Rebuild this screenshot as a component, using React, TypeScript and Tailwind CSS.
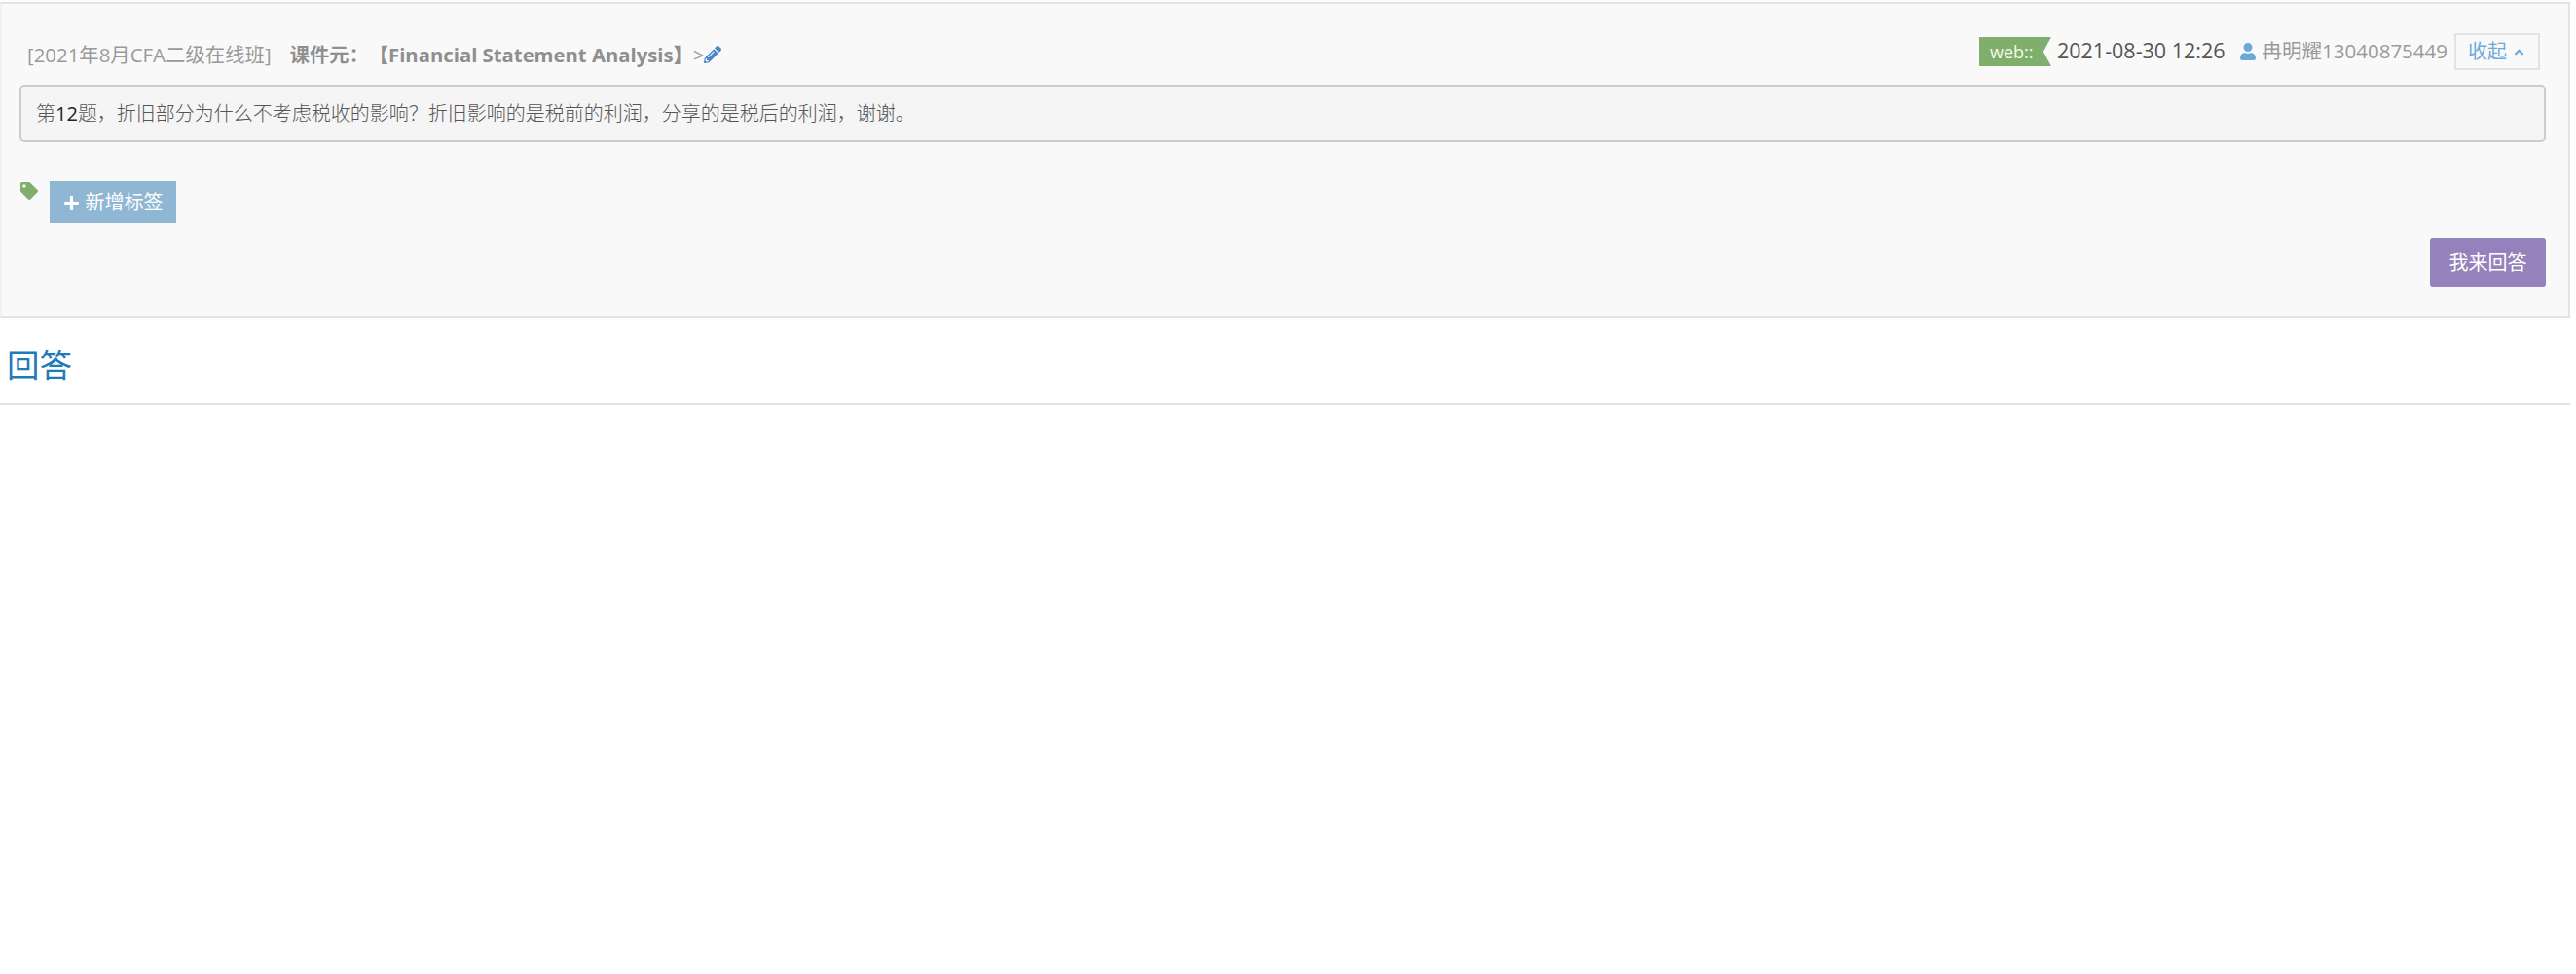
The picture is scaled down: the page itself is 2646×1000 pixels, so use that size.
import { FaAngleUp, FaPencilAlt, FaPlus, FaTag, FaUser } from "react-icons/fa";

const sans = "font-['Open_Sans','Noto_Sans_CJK_SC',sans-serif]";

export default function App() {
  return (
    <div className={`${sans} min-h-[1000px] bg-white pt-[2px] pr-[6px] [text-spacing-trim:space-all]`}>
      {/* question panel */}
      <div className="h-[324px] border-2 border-[#e3e3e3] border-l-[#f1f1f1] bg-[#f9f9f9] pl-[19px] pr-[23px]">
        <div className="flex h-[83px] items-start justify-between">
          <div className="flex items-center pt-[38px] pl-[7px] text-[20.3px] leading-[28px] text-[#999999]">
            <span className="text-[20.4px]">[2021年8月CFA二级在线班]</span>
            <span className="ml-[19px] font-bold text-[#8f8f8f]">课件元：【Financial Statement Analysis】</span>
            <span>&gt;</span>
            <FaPencilAlt className="text-[18px] text-[#4a86c8]" />
          </div>
          <div className="flex items-start pt-[30px] pr-[6px]">
            <span className="mt-[4px] flex h-[30px] w-[74px] items-center bg-[#80ae6d] pl-[11px] text-[18px] text-[#f4fbe9] [clip-path:polygon(0_0,100%_0,89%_50%,100%_100%,0_100%)]">
              web::
            </span>
            <span className="ml-[6px] mt-[3px] text-[21.5px] leading-[30px] text-[#555555]">2021-08-30 12:26</span>
            <FaUser className="ml-[14px] mt-[10px] text-[18px] text-[#6ea9d6]" />
            <span className="ml-[6px] mt-[3px] text-[20.5px] leading-[30px] text-[#999999]">冉明耀13040875449</span>
            <span className="ml-[7px] flex h-[38px] w-[88px] items-center justify-center gap-[5px] border-2 border-[#e3e3e3] text-[20px] text-[#6ea9d9]">
              收起
              <FaAngleUp className="text-[15px]" />
            </span>
          </div>
        </div>
        <div className="-ml-[1px] flex h-[59px] items-center rounded-[5px] border-2 border-[#cccccc] bg-[#f5f5f5] pl-[15px] text-[20px] font-light text-[#555555]">
          第<span className="font-medium text-[#222222]">12</span>题，折旧部分为什么不考虑税收的影响？折旧影响的是税前的利润，分享的是税后的利润，谢谢。
        </div>
        <div className="mt-[40px] flex items-start">
          <FaTag className="mt-[1px] text-[18px] text-[#80ae6d]" />
          <button className="ml-[12px] flex h-[43px] w-[130px] items-center justify-center gap-[6px] bg-[#8fb7d3] pt-[1px] text-[20px] text-white">
            <FaPlus className="text-[17px]" />
            新增标签
          </button>
        </div>
        <div className="mt-[15px] flex justify-end">
          <button className="h-[51px] w-[119px] rounded-[3px] bg-[#9581bb] text-[20px] text-white">我来回答</button>
        </div>
      </div>
      {/* answers */}
      <div className="h-[90px] border-b-2 border-[#e3e3e3] pl-[7px] pt-[26px] text-[33.5px] leading-[44px] text-[#1f7ab8]">
        回答
      </div>
    </div>
  );
}
